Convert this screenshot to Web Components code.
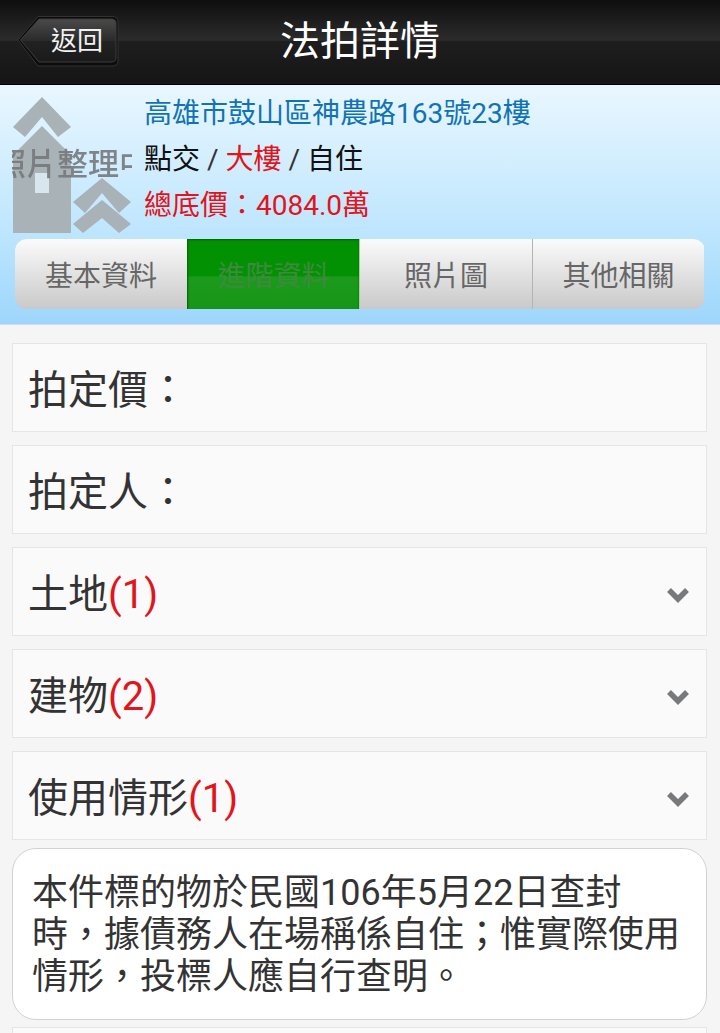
<!DOCTYPE html>
<html lang="zh-Hant">
<head>
<meta charset="utf-8">
<title>法拍詳情</title>
<style>
    html, body { margin: 0; height: 1033px; overflow: hidden; }
    body {
        background: #f5f5f5;
        color: #333;
        font-family: Roboto, "Noto Sans CJK TC", sans-serif;
    }
    .red { color: #e2141c; }
    .blk { color: #111; }
</style>
</head>
<body>
<app-header title="法拍詳情" back="返回"></app-header>
<info-panel>
    <span slot="address">高雄市鼓山區神農路163號23樓</span>
    <span slot="kind"><span class="blk">點交</span> / <span class="red">大樓</span> / <span class="blk">自住</span></span>
    <span slot="price">總底價&#xFF1A;4084.0萬</span>
    <tab-bar slot="tabs">
        <tab-item>基本資料</tab-item>
        <tab-item active>進階資料</tab-item>
        <tab-item>照片圖</tab-item>
        <tab-item>其他相關</tab-item>
    </tab-bar>
</info-panel>
<main-list>
    <detail-row>拍定價&#xFF1A;</detail-row>
    <detail-row>拍定人&#xFF1A;</detail-row>
    <detail-row expandable>土地<span class="red">(1)</span></detail-row>
    <detail-row expandable>建物<span class="red">(2)</span></detail-row>
    <detail-row expandable>使用情形<span class="red">(1)</span></detail-row>
    <note-card>本件標的物於民國106年5月22日查封時&#xFF0C;據債務人在場稱係自住&#xFF1B;惟實際使用情形&#xFF0C;投標人應自行查明。</note-card>
    <detail-row></detail-row>
</main-list>

<script>
class AppHeader extends HTMLElement {
    constructor() {
        super();
        this.attachShadow({ mode: "open" });
        this.shadowRoot.innerHTML = `
            <style>
                :host {
                    display: flex;
                    align-items: center;
                    justify-content: center;
                    position: relative;
                    height: 84px;
                    border-bottom: 1px solid #000;
                    background: linear-gradient(#0e0e0e 0, #2c2c2c 48%, #1e1e1e 49%, #151515 100%);
                    color: #fff;
                }
                .title { font-size: 40px; line-height: 84px; }
                .back {
                    position: absolute;
                    left: 17px;
                    top: 15px;
                    width: 102px;
                    height: 52px;
                    font-size: 26px;
                    line-height: 52px;
                    color: #f2f2f2;
                }
                .back svg { position: absolute; inset: 0; }
                .back span { position: absolute; left: 34px; top: 0; }
            </style>
            <div class="back">
                <svg width="102" height="52" viewBox="0 0 102 52">
                    <defs>
                        <linearGradient id="bk" x1="0" y1="0" x2="0" y2="1">
                            <stop offset="0" stop-color="#4a4a4a"/>
                            <stop offset=".5" stop-color="#2b2b2b"/>
                            <stop offset=".52" stop-color="#222"/>
                            <stop offset="1" stop-color="#1a1a1a"/>
                        </linearGradient>
                    </defs>
                    <path d="M1 25 L21 1.500 H95 Q101 1.500 101 7 V46 Q101 51 95 51 H21 Z" fill="#0c0c0c" stroke="#333" stroke-width="1"/>
                    <path d="M3.500 25 L22 4 H94 Q99 4 99 8 V43 Q99 47 94 47 H22 Z" fill="url(#bk)" stroke="#3d3d3d" stroke-width="1"/>
                </svg>
                <span></span>
            </div>
            <div class="title"></div>
        `;
    }

    connectedCallback() {
        this.shadowRoot.querySelector(".title").textContent = this.getAttribute("title");
        this.shadowRoot.querySelector(".back span").textContent = this.getAttribute("back");
    }
}

class InfoPanel extends HTMLElement {
    constructor() {
        super();
        this.attachShadow({ mode: "open" });
        this.shadowRoot.innerHTML = `
            <style>
                :host {
                    display: block;
                    height: 240px;
                    box-sizing: border-box;
                    padding: 6px 15px 15px;
                    background: linear-gradient(#e9f7ff 0, #bfe6fe 60%, #9dd6fb 100%);
                    border-bottom: 1px solid #d5dde2;
                }
                .top { display: flex; height: 148px; }
                .logo {
                    flex: none;
                    position: relative;
                    overflow: hidden;
                    width: 120px;
                    height: 140px;
                    margin: 6px 12px 0 -3px;
                }
                .logo svg { position: absolute; inset: 0; }
                .logo span {
                    position: absolute;
                    left: -17px;
                    top: 48px;
                    width: 155px;
                    text-align: center;
                    white-space: nowrap;
                    font-size: 31px;
                    line-height: 40px;
                    font-weight: 500;
                    color: #76797c;
                    opacity: .9;
                    filter: blur(.6px);
                }
                .lines { font-size: 28px; line-height: 46px; white-space: nowrap; }
                .address { color: #1173b3; }
                .kind { color: #333; }
                .price { color: #e2141c; }
            </style>
            <div class="top">
                <div class="logo">
                    <svg width="120" height="140" viewBox="0 0 120 140">
                        <g fill="#a9b2b6">
                            <path d="M1 30 L30 0 L59 30 L46 40 L30 20 L13 40 Z"/>
                            <path d="M1 58 L30 29 L59 58 V136 H1 Z"/>
                            <path d="M61 105 L90 81 L119 105 L107 116 L90 96 L73 116 Z"/>
                            <path d="M61 127 L90 103 L119 127 L107 136 L90 121 L71 136 Z"/>
                        </g>
                        <rect x="23" y="76" width="14" height="20" fill="#d9e6ee"/>
                    </svg>
                    <span>照片整理中</span>
                </div>
                <div class="lines">
                    <div class="address"><slot name="address"></slot></div>
                    <div class="kind"><slot name="kind"></slot></div>
                    <div class="price"><slot name="price"></slot></div>
                </div>
            </div>
            <slot name="tabs"></slot>
        `;
    }
}

class TabBar extends HTMLElement {
    constructor() {
        super();
        this.attachShadow({ mode: "open" });
        this.shadowRoot.innerHTML = `
            <style>
                :host {
                    display: grid;
                    grid-template-columns: 172px 173px 173px 171px;
                    height: 70px;
                    border-radius: 12px;
                    overflow: hidden;
                }
            </style>
            <slot></slot>
        `;
    }
}

class TabItem extends HTMLElement {
    constructor() {
        super();
        this.attachShadow({ mode: "open" });
        this.shadowRoot.innerHTML = `
            <style>
                :host {
                    display: flex;
                    align-items: center;
                    justify-content: center;
                    box-sizing: border-box;
                    font-size: 28px;
                    color: #666;
                    background: linear-gradient(#fbfbfb, #c9c9c9);
                    border-right: 1px solid #aeb4b7;
                }
                :host(:first-child) { border-right: 0; }
                :host(:last-child) { border-right: 0; }
                :host([active]) {
                    color: #3f8a3f;
                    background: linear-gradient(#029102 0, #029102 53%, #1c9a1c 54%, #169516 100%);
                    box-shadow: inset 0 1px 2px #035f03;
                    border-left: 1px solid #0a6a0a;
                    border-right: 1px solid #9fd49f;
                }
            </style>
            <slot></slot>
        `;
    }
}

class MainList extends HTMLElement {
    constructor() {
        super();
        this.attachShadow({ mode: "open" });
        this.shadowRoot.innerHTML = `
            <style>
                :host {
                    display: flex;
                    flex-direction: column;
                    gap: 13px;
                    padding: 18px 13px 0 12px;
                }
            </style>
            <slot></slot>
        `;
    }
}

class DetailRow extends HTMLElement {
    constructor() {
        super();
        this.attachShadow({ mode: "open" });
        this.shadowRoot.innerHTML = `
            <style>
                :host {
                    display: flex;
                    flex: none;
                    align-items: center;
                    justify-content: space-between;
                    box-sizing: border-box;
                    height: 89px;
                    padding: 0 15px 0 15px;
                    background: #fafafa;
                    border: 1px solid #e4e6e6;
                    font-size: 40px;
                    color: #333;
                }
                .label { padding-bottom: 2px; }
                svg { display: none; margin-top: 6px; }
                :host([expandable]) svg { display: block; }
            </style>
            <div class="label"><slot></slot></div>
            <svg width="26" height="18" viewBox="0 0 26 18">
                <path d="M4 4 L13 13 L22 4" fill="none" stroke="#77797a" stroke-width="5.500"/>
            </svg>
        `;
    }
}

class NoteCard extends HTMLElement {
    constructor() {
        super();
        this.attachShadow({ mode: "open" });
        this.shadowRoot.innerHTML = `
            <style>
                :host {
                    display: block;
                    flex: none;
                    box-sizing: border-box;
                    height: 172px;
                    margin: -5px 0 -6px;
                    padding: 23px 19px 0;
                    background: #fff;
                    border: 1px solid #d2d2d2;
                    border-radius: 24px;
                    font-size: 36px;
                    line-height: 42px;
                    color: #333;
                }
            </style>
            <slot></slot>
        `;
    }
}

customElements.define("app-header", AppHeader);
customElements.define("info-panel", InfoPanel);
customElements.define("tab-bar", TabBar);
customElements.define("tab-item", TabItem);
customElements.define("main-list", MainList);
customElements.define("detail-row", DetailRow);
customElements.define("note-card", NoteCard);
</script>
</body>
</html>
